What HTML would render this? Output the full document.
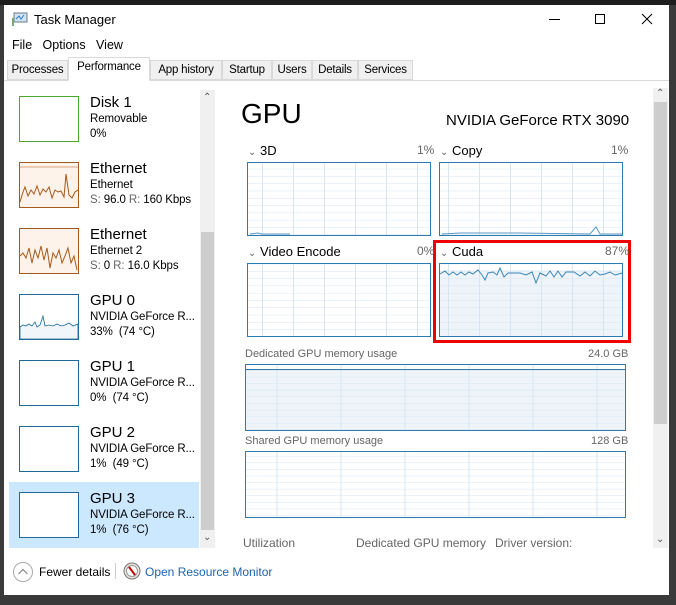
<!DOCTYPE html>
<html><head><meta charset="utf-8"><style>
*{margin:0;padding:0;box-sizing:border-box}
body{width:676px;height:605px;background:#3a3a3a;position:relative;overflow:hidden;font-family:"Liberation Sans",sans-serif;color:#000}
.a{position:absolute;white-space:nowrap}
.win{position:absolute;left:4px;top:5px;width:665px;height:590px;background:#fff}
.s{font-size:12px}
.g{color:#666}
.tab{position:absolute;top:60px;height:20px;border:1px solid #d9d9d9;background:#f0f0f0;font-size:11.5px;padding:3px 0 0;text-align:center;white-space:nowrap;letter-spacing:-.2px}
.t{font-size:15px}
.sub{font-size:11.5px;line-height:15px;letter-spacing:-.1px}
.thumb{position:absolute;left:19px;width:60px;height:46px;border:1px solid}
</style></head><body>
<div class="a" style="left:0;top:0;width:676px;height:5px;background:#1e1e1e"></div>
<div class="win"></div>
<!-- title -->
<svg class="a" style="left:12px;top:12px" width="16" height="14"><rect x="2" y="1" width="13" height="9" fill="#cfe3f2" stroke="#6b7b8a"/><polyline points="4,7 7,4 9,7 12,3" fill="none" stroke="#2b7bc0"/><rect x="0" y="6" width="2" height="8" fill="#7a7"/></svg>
<div class="a s" style="left:34px;top:12px;font-size:13px">Task Manager</div>
<div class="a" style="left:549px;top:19px;width:11px;height:1px;background:#000"></div>
<div class="a" style="left:595px;top:14px;width:10px;height:10px;border:1px solid #000"></div>
<svg class="a" style="left:641px;top:13px" width="12" height="12"><path d="M1 1L11 11M11 1L1 11" stroke="#000"/></svg>
<div class="a s" style="left:12px;top:38px;font-size:12.5px">File&nbsp;&nbsp;&nbsp;Options&nbsp;&nbsp;&nbsp;View</div>
<div class="a" style="left:4px;top:80px;width:665px;height:1px;background:#d9d9d9"></div>
<div class="tab" style="left:7px;width:61px">Processes</div>
<div class="tab" style="left:68px;top:57px;height:24px;width:82px;background:#fff;border-bottom:1px solid #fff">Performance</div>
<div class="tab" style="left:150px;width:72px">App history</div>
<div class="tab" style="left:222px;width:50px">Startup</div>
<div class="tab" style="left:272px;width:40px">Users</div>
<div class="tab" style="left:312px;width:46px">Details</div>
<div class="tab" style="left:358px;width:55px">Services</div>

<!-- left list -->
<div class="a" style="left:9px;top:482px;width:190px;height:66px;background:#cce8ff"></div>
<div class="a" style="left:200px;top:90px;width:15px;height:458px;background:#f0f0f0"></div>
<div class="a" style="left:201px;top:232px;width:13px;height:298px;background:#cdcdcd"></div>
<div class="a" style="left:203px;top:92px;font-size:10px;color:#555">&#8963;</div>
<div class="a" style="left:203px;top:532px;font-size:10px;color:#555">&#8964;</div>

<div class="thumb" style="top:96px;border-color:#4ea72e"></div>
<div class="a t" style="left:90px;top:94px">Disk 1</div>
<div class="a sub" style="left:90px;top:112px">Removable<br>0%</div>

<svg class="a" style="left:19px;top:162px" width="60" height="46"><rect x=".5" y=".5" width="59" height="45" fill="#fdf3ea" stroke="#a7591b"/><polyline points="1,40 4,30 6,25 9,34 12,28 15,32 18,24 21,33 24,27 27,30 30,25 33,36 36,28 39,30 42,29 45,35 47,12 50,33 53,36 56,30 59,28" fill="none" stroke="#a7591b"/><line x1="1" y1="5" x2="59" y2="5" stroke="#d9a37a"/></svg>
<div class="a t" style="left:90px;top:160px">Ethernet</div>
<div class="a sub" style="left:90px;top:178px">Ethernet<br><span class="g">S:</span> 96.0 <span class="g">R:</span> 160 Kbps</div>

<svg class="a" style="left:19px;top:228px" width="60" height="46"><rect x=".5" y=".5" width="59" height="45" fill="#fdf3ea" stroke="#a7591b"/><polyline points="1,28 4,25 7,30 10,20 13,35 16,22 19,30 22,18 25,32 28,20 31,40 34,25 37,30 40,22 43,35 46,28 49,20 52,35 55,28 58,42" fill="none" stroke="#a7591b"/></svg>
<div class="a t" style="left:90px;top:226px">Ethernet</div>
<div class="a sub" style="left:90px;top:244px">Ethernet 2<br><span class="g">S:</span> 0 <span class="g">R:</span> 16.0 Kbps</div>

<svg class="a" style="left:19px;top:294px" width="60" height="46"><rect x=".5" y=".5" width="59" height="45" fill="#fff" stroke="#1f6a9a"/><path d="M1 33L4 31 7 32 10 30 13 32 16 28 18 33 21 31 24 22 26 32 30 31 34 32 38 30 42 32 46 31 50 29 54 32 59 30V45H1Z" fill="#f1f6fb" stroke="#1f6a9a" stroke-width=".8"/></svg>
<div class="a t" style="left:90px;top:292px">GPU 0</div>
<div class="a sub" style="left:90px;top:310px">NVIDIA GeForce R...<br>33%&nbsp; (74 °C)</div>

<div class="thumb" style="top:360px;border-color:#1f6a9a;background:#fff"></div>
<div class="a t" style="left:90px;top:358px">GPU 1</div>
<div class="a sub" style="left:90px;top:376px">NVIDIA GeForce R...<br>0%&nbsp; (74 °C)</div>

<div class="thumb" style="top:426px;border-color:#1f6a9a;background:#fff"></div>
<div class="a t" style="left:90px;top:424px">GPU 2</div>
<div class="a sub" style="left:90px;top:442px">NVIDIA GeForce R...<br>1%&nbsp; (49 °C)</div>

<div class="thumb" style="top:492px;border-color:#1f6a9a;background:#fff"></div>
<div class="a t" style="left:90px;top:490px">GPU 3</div>
<div class="a sub" style="left:90px;top:508px">NVIDIA GeForce R...<br>1%&nbsp; (76 °C)</div>

<!-- right panel -->
<div class="a" style="left:653px;top:88px;width:15px;height:460px;background:#f0f0f0"></div>
<div class="a" style="left:654px;top:102px;width:13px;height:322px;background:#cdcdcd"></div>
<div class="a" style="left:656px;top:88px;font-size:10px;color:#555">&#8963;</div>
<div class="a" style="left:656px;top:534px;font-size:10px;color:#555">&#8964;</div>

<div class="a" style="left:241px;top:98px;font-size:28px">GPU</div>
<div class="a" style="left:446px;top:112px;font-size:15px">NVIDIA GeForce RTX 3090</div>

<svg class="a" style="left:0;top:0" width="676" height="605">
<defs>
<pattern id="p" x="247" y="162" width="31" height="7.3" patternUnits="userSpaceOnUse"><path d="M15.5 0V7.3M0 7.3H31" stroke="#d7e6f1" fill="none"/></pattern>
<pattern id="q" x="245" y="364" width="64" height="6.6" patternUnits="userSpaceOnUse"><path d="M32 0V7M0 6.6H64" stroke="#d7e6f1" fill="none"/></pattern>
</defs>
<rect x="247.5" y="162.5" width="183" height="73" fill="url(#p)" stroke="#2b7bb0"/>
<rect x="439.5" y="162.5" width="183" height="73" fill="url(#p)" stroke="#2b7bb0"/>
<rect x="247.5" y="263.5" width="183" height="73" fill="url(#p)" stroke="#2b7bb0"/>
<rect x="439.5" y="270" width="183" height="66" fill="#eef4fa"/>
<rect x="439.5" y="263.5" width="183" height="73" fill="url(#p)" stroke="#2b7bb0"/>
<polyline points="440,274 445,271 449,275 453,272 457,275 461,272 465,275 469,272 473,274 478,270 482,275 485,280 488,273 493,272 497,275 500,268 504,277 508,273 514,273 520,273 526,275 532,272 536,283 540,273 546,276 550,271 554,277 558,271 562,277 566,272 574,272 580,276 585,272 590,276 595,271 600,275 605,274 610,272 615,275 622,273" fill="none" stroke="#3c86b8"/>
<polyline points="250,234 258,233 262,234 282,234 290,234" fill="none" stroke="#5a98c4"/>
<polyline points="442,234 460,233 520,233 590,234 596,227 600,234 622,234" fill="none" stroke="#5a98c4"/>
<rect x="434.5" y="241.5" width="195" height="100" fill="none" stroke="#e00" stroke-width="3"/>
<rect x="245.5" y="369" width="380" height="61" fill="#eef4fa"/>
<rect x="245.5" y="364.5" width="380" height="66" fill="url(#q)" stroke="#2b7bb0"/>
<line x1="246" y1="369.5" x2="625" y2="369.5" stroke="#2b7bb0"/>
<rect x="245.5" y="451.5" width="380" height="66" fill="url(#q)" stroke="#2b7bb0"/>
</svg>
<div class="a" style="left:248px;top:143px;font-size:13px"><span class="g" style="font-size:10px">&#8964;</span>&nbsp;3D</div>
<div class="a s g" style="left:417px;top:143px">1%</div>
<div class="a" style="left:440px;top:143px;font-size:13px"><span class="g" style="font-size:10px">&#8964;</span>&nbsp;Copy</div>
<div class="a s g" style="left:611px;top:143px">1%</div>
<div class="a" style="left:248px;top:244px;font-size:13px"><span class="g" style="font-size:10px">&#8964;</span>&nbsp;Video Encode</div>
<div class="a s g" style="left:417px;top:244px">0%</div>
<div class="a" style="left:440px;top:244px;font-size:13px"><span class="g" style="font-size:10px">&#8964;</span>&nbsp;Cuda</div>
<div class="a s g" style="left:605px;top:244px">87%</div>
<div class="a s g" style="left:245px;top:348px;font-size:11px">Dedicated GPU memory usage</div>
<div class="a s g" style="left:588px;top:348px;font-size:11px">24.0 GB</div>
<div class="a s g" style="left:245px;top:435px;font-size:11px">Shared GPU memory usage</div>
<div class="a s g" style="left:591px;top:435px;font-size:11px">128 GB</div>
<div class="a s g" style="left:243px;top:536px">Utilization</div>
<div class="a s g" style="left:356px;top:536px">Dedicated GPU memory</div>
<div class="a s g" style="left:495px;top:536px">Driver version:</div>

<!-- footer -->
<svg class="a" style="left:12px;top:561px" width="22" height="22"><circle cx="11" cy="11" r="9.5" fill="#fff" stroke="#aaa"/><path d="M6.5 13L11 8.5 15.5 13" fill="none" stroke="#888" stroke-width="1.2"/></svg>
<div class="a s" style="left:39px;top:565px">Fewer details</div>
<div class="a" style="left:115px;top:563px;width:1px;height:16px;background:#ccc"></div>
<svg class="a" style="left:123px;top:562px" width="18" height="18"><circle cx="9" cy="9" r="8" fill="#e8e4dc" stroke="#777"/><circle cx="9" cy="9" r="5.5" fill="#fff" stroke="#999"/><path d="M6 5L12 13" stroke="#c00" stroke-width="2"/></svg>
<div class="a s" style="left:145px;top:565px;color:#1a64b0">Open Resource Monitor</div>
</body></html>
